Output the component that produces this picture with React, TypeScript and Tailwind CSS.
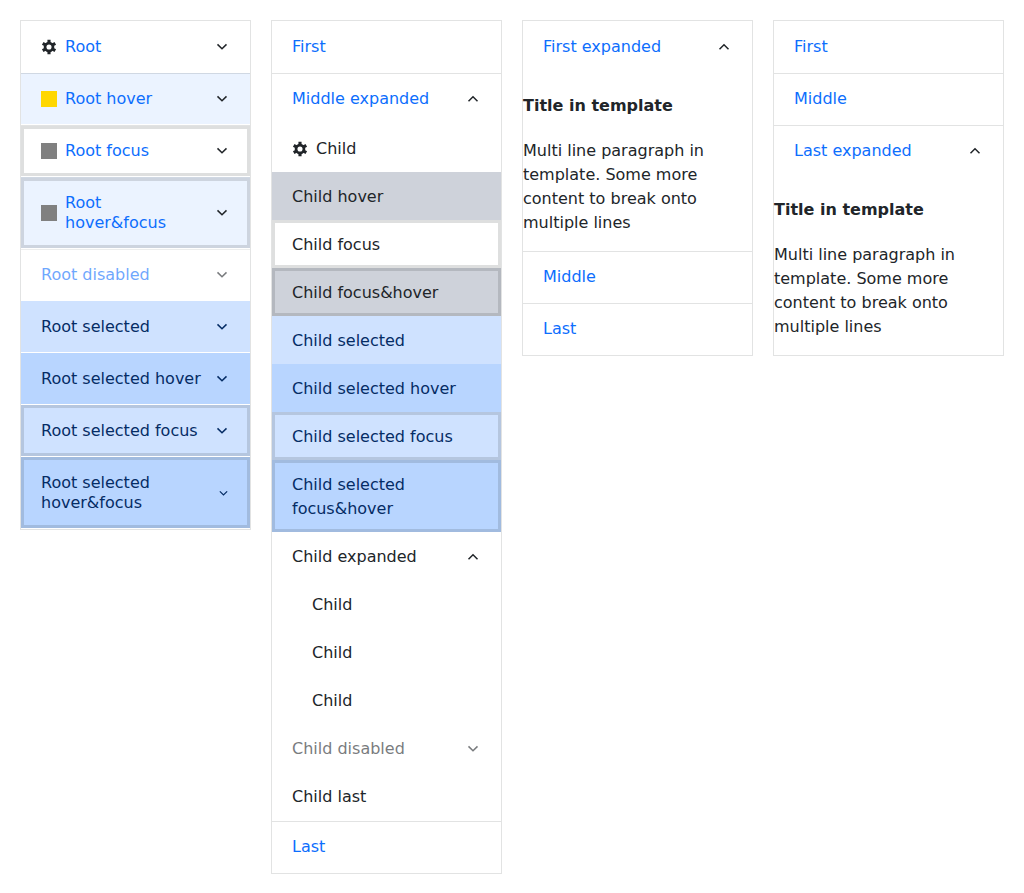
import type { ReactNode } from 'react';
import clsx from 'clsx';

type State = {
  hover?: boolean;
  focus?: boolean;
  selected?: boolean;
  disabled?: boolean;
};

type Item = State & {
  text: string;
  icon?: 'gear' | 'gold' | 'gray';
  arrow?: 'up' | 'down';
  smallArrow?: boolean;
  nested?: boolean;
  content?: ReactNode;
};

function Gear() {
  return (
    <svg viewBox="0 0 512 512" className="size-4 shrink-0 text-[#212529]" fill="none" stroke="currentColor" aria-hidden="true">
      <circle cx="256" cy="256" r="126" strokeWidth="88" />
      <g strokeWidth="100">
        <path d="M256 136V24M256 376v112" />
        <path d="M256 136V24M256 376v112" transform="rotate(60 256 256)" />
        <path d="M256 136V24M256 376v112" transform="rotate(120 256 256)" />
      </g>
    </svg>
  );
}

function Chevron({ direction, small }: { direction: 'up' | 'down'; small?: boolean }) {
  return (
    <svg
      viewBox="0 0 16 16"
      className={clsx('ml-auto shrink-0', small ? 'size-[13px]' : 'size-4')}
      fill="none"
      stroke="currentColor"
      strokeWidth="1.5"
      aria-hidden="true"
    >
      <path d={direction === 'up' ? 'M3.5 10.2 8 5.8l4.5 4.4' : 'M3.5 5.4 8 9.8l4.5-4.4'} />
    </svg>
  );
}

function ItemIcon({ icon }: { icon: Item['icon'] }) {
  if (icon === 'gear') return <Gear />;
  if (icon === 'gold') return <span className="size-4 shrink-0 bg-[#ffd700]" />;
  if (icon === 'gray') return <span className="size-4 shrink-0 bg-[#808080]" />;
  return null;
}

function background({ hover, selected }: State, isRoot: boolean) {
  if (selected) return hover ? 'bg-[#b8d5ff]' : 'bg-[#cfe2ff]';
  if (hover) return isRoot ? 'bg-[#ebf3ff]' : 'bg-[#ced2da]';
  return 'bg-white';
}

function ItemButton({ item, level }: { item: Item; level: 'root' | 'child' }) {
  const isRoot = level === 'root';
  return (
    <button
      type="button"
      disabled={item.disabled}
      aria-expanded={item.arrow ? item.arrow === 'up' : undefined}
      className={clsx(
        'flex w-full items-center gap-2 pr-5 text-left',
        item.nested ? 'pl-10' : 'pl-5',
        isRoot ? 'pb-[15px] leading-5' : 'pt-[13px] pb-[11px] leading-6',
        isRoot && (item.selected ? 'pt-4' : 'border-t border-[#212529]/13 pt-[15px] group-first:border-transparent'),
        background(item, isRoot),
        item.focus && 'shadow-[inset_0_0_0_3px_rgba(33,37,41,0.15)]',
        item.disabled && 'opacity-60',
        item.selected ? 'text-[#052c65]' : 'text-[#212529]',
      )}
    >
      <ItemIcon icon={item.icon} />
      <span className={clsx(isRoot && !item.selected && 'text-[#0d6efd]')}>{item.text}</span>
      {item.arrow && <Chevron direction={item.arrow} small={item.smallArrow} />}
    </button>
  );
}

function PanelBar({ items }: { items: Item[] }) {
  return (
    <ul className="border border-[#212529]/13 bg-white">
      {items.map((item) => (
        <li key={item.text} className={clsx('group', item.arrow === 'up' ? 'pb-0' : 'pb-px')}>
          <ItemButton item={item} level="root" />
          {item.content}
        </li>
      ))}
    </ul>
  );
}

const rootStates: Item[] = [
  { text: 'Root', icon: 'gear', arrow: 'down' },
  { text: 'Root hover', icon: 'gold', arrow: 'down', hover: true },
  { text: 'Root focus', icon: 'gray', arrow: 'down', focus: true },
  { text: 'Root hover&focus', icon: 'gray', arrow: 'down', hover: true, focus: true },
  { text: 'Root disabled', arrow: 'down', disabled: true },
  { text: 'Root selected', arrow: 'down', selected: true },
  { text: 'Root selected hover', arrow: 'down', selected: true, hover: true },
  { text: 'Root selected focus', arrow: 'down', selected: true, focus: true },
  { text: 'Root selected hover&focus', arrow: 'down', smallArrow: true, selected: true, hover: true, focus: true },
];

const childStates: Item[] = [
  { text: 'Child', icon: 'gear' },
  { text: 'Child hover', hover: true },
  { text: 'Child focus', focus: true },
  { text: 'Child focus&hover', hover: true, focus: true },
  { text: 'Child selected', selected: true },
  { text: 'Child selected hover', selected: true, hover: true },
  { text: 'Child selected focus', selected: true, focus: true },
  { text: 'Child selected focus&hover', selected: true, hover: true, focus: true },
  { text: 'Child expanded', arrow: 'up' },
  { text: 'Child', nested: true },
  { text: 'Child', nested: true },
  { text: 'Child', nested: true },
  { text: 'Child disabled', arrow: 'down', disabled: true },
  { text: 'Child last' },
];

const childList = (
  <ul className="pb-px">
    {childStates.map((item, index) => (
      <li key={index}>
        <ItemButton item={item} level="child" />
      </li>
    ))}
  </ul>
);

const template = (
  <div className="pt-[22px] pb-4 leading-6">
    <h4 className="mb-[21px] font-bold">Title in template</h4>
    <p>Multi line paragraph in template. Some more content to break onto multiple lines</p>
  </div>
);

export default function App() {
  return (
    <main className="grid grid-cols-4 items-start gap-5 p-5 font-['DejaVu_Sans',sans-serif] text-base text-[#212529]">
      <PanelBar items={rootStates} />
      <PanelBar items={[{ text: 'First' }, { text: 'Middle expanded', arrow: 'up', content: childList }, { text: 'Last' }]} />
      <PanelBar items={[{ text: 'First expanded', arrow: 'up', content: template }, { text: 'Middle' }, { text: 'Last' }]} />
      <PanelBar items={[{ text: 'First' }, { text: 'Middle' }, { text: 'Last expanded', arrow: 'up', content: template }]} />
    </main>
  );
}
